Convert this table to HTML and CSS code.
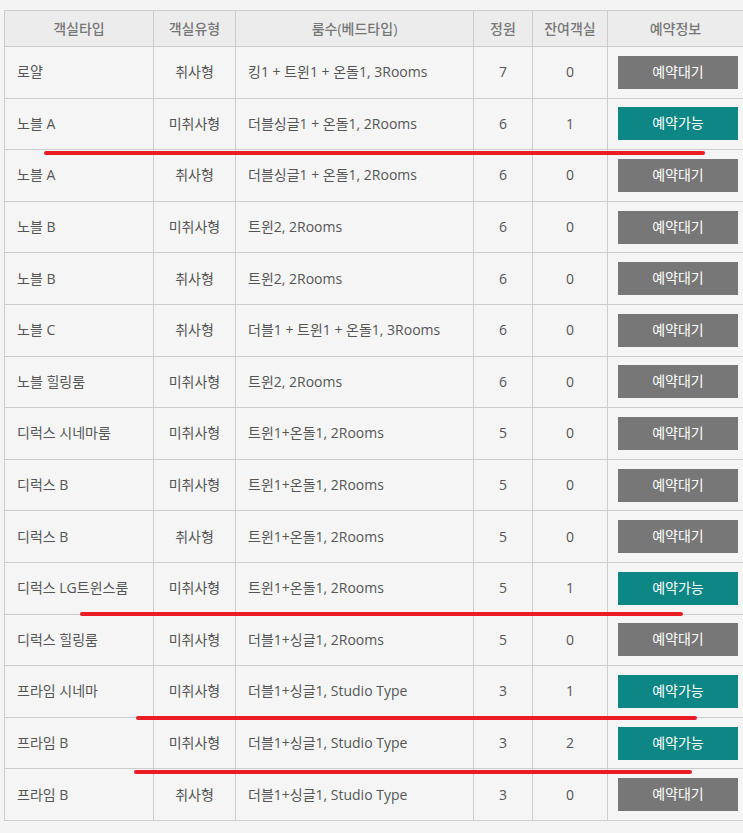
FILE: index.html
```html
<!DOCTYPE html>
<html lang="ko">
<head>
<meta charset="utf-8">
<title>객실 예약정보</title>
<link rel="stylesheet" href="styles.css">
</head>
<body>
<div class="wrap">
  <table class="rooms">
    <colgroup>
      <col class="c1"><col class="c2"><col class="c3"><col class="c4"><col class="c5"><col class="c6">
    </colgroup>
    <thead>
      <tr><th>객실타입</th><th>객실유형</th><th>룸수(베드타입)</th><th>정원</th><th>잔여객실</th><th>예약정보</th></tr>
    </thead>
    <tbody>
      <tr><td class="name">로얄</td><td>취사형</td><td class="bed">킹1 + 트윈1 + 온돌1, 3Rooms</td><td>7</td><td>0</td><td><span class="btn wait">예약대기</span></td></tr>
      <tr><td class="name">노블 A</td><td>미취사형</td><td class="bed">더블싱글1 + 온돌1, 2Rooms</td><td>6</td><td>1</td><td><span class="btn ok">예약가능</span></td></tr>
      <tr><td class="name">노블 A</td><td>취사형</td><td class="bed">더블싱글1 + 온돌1, 2Rooms</td><td>6</td><td>0</td><td><span class="btn wait">예약대기</span></td></tr>
      <tr><td class="name">노블 B</td><td>미취사형</td><td class="bed">트윈2, 2Rooms</td><td>6</td><td>0</td><td><span class="btn wait">예약대기</span></td></tr>
      <tr><td class="name">노블 B</td><td>취사형</td><td class="bed">트윈2, 2Rooms</td><td>6</td><td>0</td><td><span class="btn wait">예약대기</span></td></tr>
      <tr><td class="name">노블 C</td><td>취사형</td><td class="bed">더블1 + 트윈1 + 온돌1, 3Rooms</td><td>6</td><td>0</td><td><span class="btn wait">예약대기</span></td></tr>
      <tr><td class="name">노블 힐링룸</td><td>미취사형</td><td class="bed">트윈2, 2Rooms</td><td>6</td><td>0</td><td><span class="btn wait">예약대기</span></td></tr>
      <tr><td class="name">디럭스 시네마룸</td><td>미취사형</td><td class="bed">트윈1+온돌1, 2Rooms</td><td>5</td><td>0</td><td><span class="btn wait">예약대기</span></td></tr>
      <tr><td class="name">디럭스 B</td><td>미취사형</td><td class="bed">트윈1+온돌1, 2Rooms</td><td>5</td><td>0</td><td><span class="btn wait">예약대기</span></td></tr>
      <tr><td class="name">디럭스 B</td><td>취사형</td><td class="bed">트윈1+온돌1, 2Rooms</td><td>5</td><td>0</td><td><span class="btn wait">예약대기</span></td></tr>
      <tr><td class="name">디럭스 LG트윈스룸</td><td>미취사형</td><td class="bed">트윈1+온돌1, 2Rooms</td><td>5</td><td>1</td><td><span class="btn ok">예약가능</span></td></tr>
      <tr><td class="name">디럭스 힐링룸</td><td>미취사형</td><td class="bed">더블1+싱글1, 2Rooms</td><td>5</td><td>0</td><td><span class="btn wait">예약대기</span></td></tr>
      <tr><td class="name">프라임 시네마</td><td>미취사형</td><td class="bed">더블1+싱글1, Studio Type</td><td>3</td><td>1</td><td><span class="btn ok">예약가능</span></td></tr>
      <tr><td class="name">프라임 B</td><td>미취사형</td><td class="bed">더블1+싱글1, Studio Type</td><td>3</td><td>2</td><td><span class="btn ok">예약가능</span></td></tr>
      <tr><td class="name">프라임 B</td><td>취사형</td><td class="bed">더블1+싱글1, Studio Type</td><td>3</td><td>0</td><td><span class="btn wait">예약대기</span></td></tr>
    </tbody>
  </table>
  <span class="mark m1"></span>
  <span class="mark m2"></span>
  <span class="mark m3"></span>
  <span class="mark m4"></span>
</div>
</body>
</html>
```
FILE: styles.css
```css
html, body {
  margin: 0;
  padding: 0;
  background: #f4f4f4;
}
body {
  font-family: "Open Sans", "Noto Sans CJK KR", sans-serif;
  font-size: 14px;
  color: #555;
}
.wrap {
  position: relative;
  padding: 10px 0 0 4px;
}
.rooms {
  border-collapse: collapse;
  table-layout: fixed;
  width: 739px;
  background: #f5f5f5;
}
.c1 { width: 149px; }
.c2 { width: 82px; }
.c3 { width: 238px; }
.c4 { width: 59px; }
.c5 { width: 75px; }
.c6 { width: 136px; }
.rooms th, .rooms td {
  border: 1px solid #cccccc;
  text-align: center;
  vertical-align: middle;
  padding: 0 10px;
  line-height: 20px;
  white-space: nowrap;
}
.rooms th:last-child, .rooms td:last-child {
  border-right-color: transparent;
}
.rooms thead tr { height: 36px; }
.rooms th {
  background: #ececec;
  color: #777;
  font-weight: 500;
}
.rooms tbody tr { height: 51.6px; }
.rooms td.name, .rooms td.bed {
  text-align: left;
  padding-left: 12px;
}
.btn {
  display: block;
  width: 120px;
  height: 33px;
  line-height: 32px;
  color: #fff;
  text-align: center;
}
.btn.wait { background: #777777; }
.btn.ok { background: #0d8686; }
.mark {
  position: absolute;
  height: 4px;
  border-radius: 2px;
  background: #ec1c24;
}
.m1 { left: 44px; top: 151px; width: 661px; }
.m2 { left: 80px; top: 612px; width: 603px; }
.m3 { left: 136px; top: 716px; width: 561px; }
.m4 { left: 134px; top: 770px; width: 558px; }
```
